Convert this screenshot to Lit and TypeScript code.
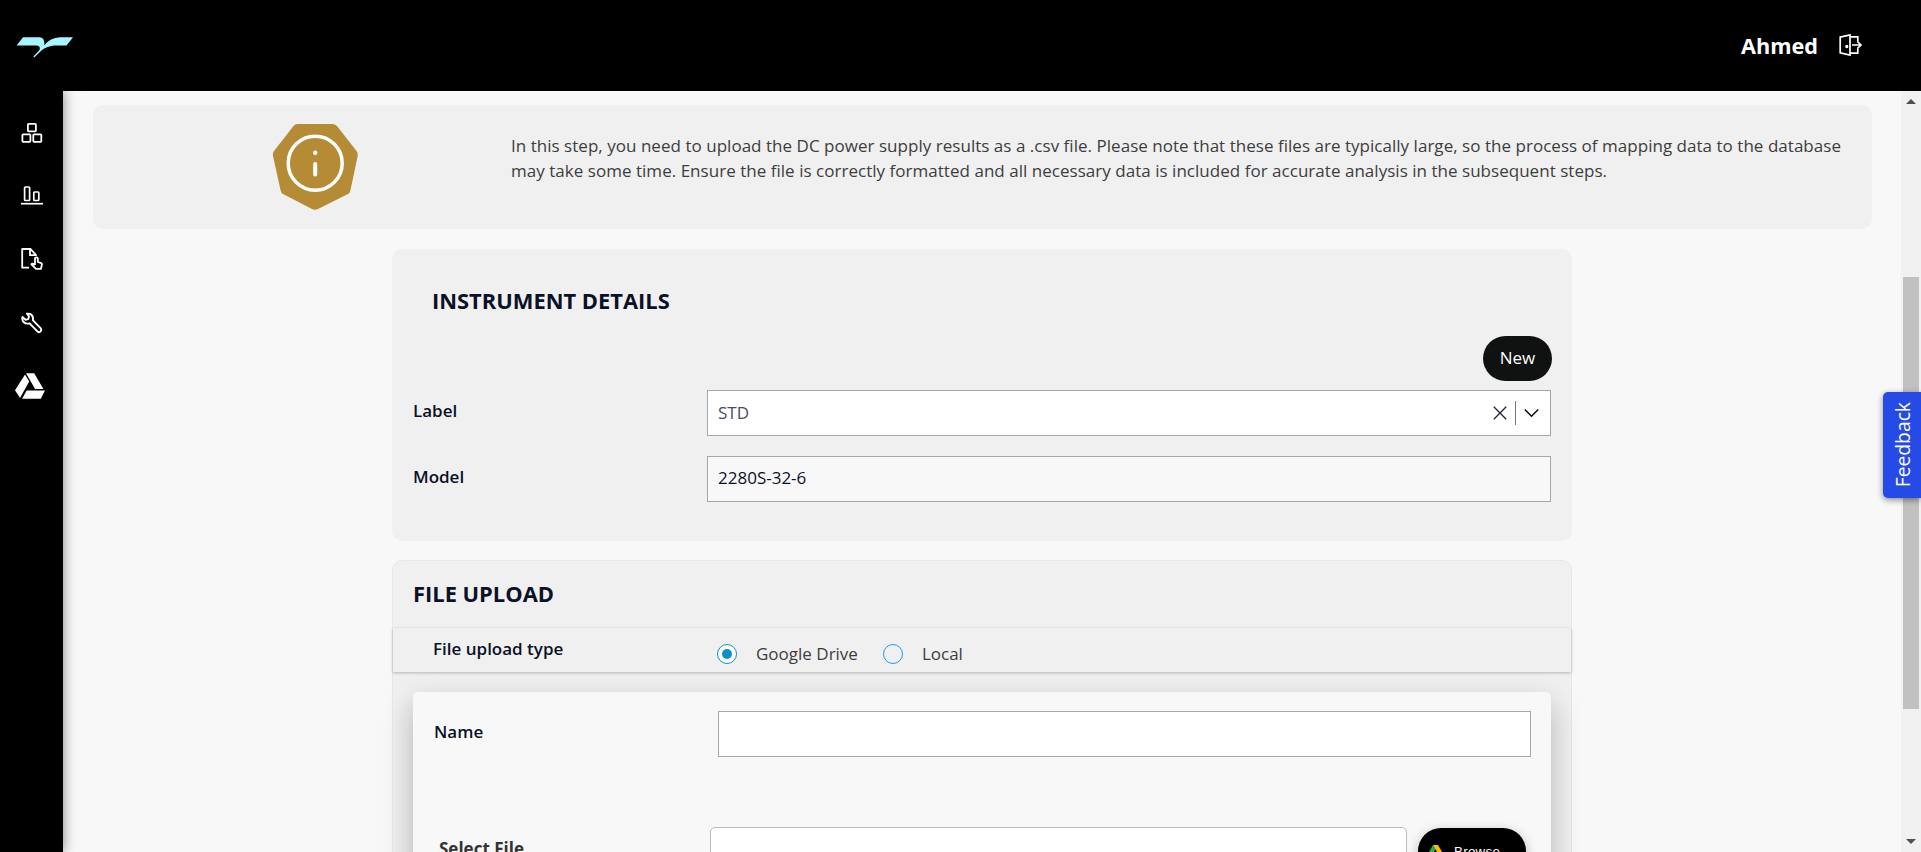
import { LitElement, html, css } from "lit";
import { customElement, state } from "lit/decorators.js";

const navIcons = [
  html`<svg width="22" height="22" viewBox="0 0 22 22" fill="none" stroke="#fff" stroke-width="1.8">
    <rect x="6.900" y="1.800" width="8" height="7.600" rx=".8"/><rect x="1.400" y="12.300" width="8" height="7.600" rx=".8"/><rect x="12.300" y="12.300" width="8" height="7.600" rx=".8"/></svg>`,
  html`<svg width="22" height="22" viewBox="0 0 22 22" fill="none" stroke="#fff" stroke-width="1.7">
    <rect x="3.600" y="2" width="5" height="13.500" rx=".8"/><rect x="12.800" y="7" width="5" height="8.500" rx=".8"/><path d="M0 18.700h22"/></svg>`,
  html`<svg width="22" height="22" viewBox="0 0 22 22" fill="none" stroke="#fff" stroke-width="1.8" stroke-linejoin="round">
    <path d="M8 19.700H1.200V1h8.400l5.400 6.200H9V1.400"/><path d="M14 17v-6.400q0-1.200 1.400-1.200t1.400 1.200V14l3.500 1.200q.8.400.6 1.200l-.9 4.400h-5l-4.600-4.400q.8-1.800 3.600.6"/></svg>`,
  html`<svg width="22" height="22" viewBox="0 0 22 22" fill="none" stroke="#fff" stroke-width="1.900" stroke-linejoin="round">
    <path d="M6 1.600 9 1.900q3.200 1.600 3 5.200l-.2 1.100 8 8.200q1 1.600-.2 3t-3 .2l-8-8.300q-3.600 1-5.800-1.100T1.500 5l3 2.800 2.800-.7.700-2.600z"/></svg>`,
  html`<svg class="drive" width="30" height="26" viewBox="0 0 30 26" fill="#fff">
    <path d="M10 1.500 14.200 8.400 5 25 0 17.200zM11 .3h8.200l9.200 15.700H20.100zM11.700 17.500H30L25.800 25.700H7.100z"/></svg>`,
];

@customElement("app-root")
export class AppRoot extends LitElement {
  @state() private source = "Google Drive";

  static styles = css`
    :host { display: flex; flex-direction: column; height: 852px; overflow: hidden; position: relative; background: #f8f8f8; font: 17px/25px "Open Sans", sans-serif; color: #3d3d3d; }
    * { box-sizing: border-box; }
    svg { display: block; flex: none; }
    header { height: 91px; flex: none; background: #000; display: flex; align-items: center; padding: 0 59px 1px 16px; color: #fff; }
    .logo { margin-top: 4px; }
    .user { margin-left: auto; margin-right: 21px; font-size: 21.700px; font-weight: 700; }
    .body { display: flex; flex: 1; min-height: 0; }
    nav { width: 63px; flex: none; background: #000; box-shadow: 0 0 12px rgba(0,0,0,.5); display: flex; flex-direction: column; align-items: center; padding-top: 10px; }
    .item { height: 63.300px; display: flex; align-items: center; }
    .drive { margin-right: 3px; }
    main { flex: 1; min-width: 0; padding: 14px 29px 0 30px; overflow: hidden; }
    .banner { height: 124px; border-radius: 10px; background: #f0f0f0; display: flex; padding: 19px 20px 0 179px; }
    .banner p { margin: 9px 0 0 152px; white-space: nowrap; letter-spacing: .029px; }
    .card { width: 1180px; margin: 20px 0 0 299px; background: #f0f0f0; border-radius: 10px; color: #0b1126; }
    .details { height: 292px; padding: 38px 21px 0; }
    h2 { margin: 0; font-size: 21.900px; line-height: 28px; font-weight: 700; }
    .details h2 { margin-left: 19px; }
    .actions { display: flex; justify-content: flex-end; margin: 21px -1px 9px 0; }
    .new { width: 69px; height: 45px; border: 0; border-radius: 22.500px; background: #101211; color: #fff; font: 500 17px "Open Sans"; padding: 0 0 2px; }
    .field { display: flex; height: 46px; margin-bottom: 20px; }
    .label { font-weight: 600; font-size: 17px; }
    .field .label { width: 294px; padding-top: 8px; }
    .box { flex: 1; border: 1px solid #a6a8a8; background: #fff; display: flex; align-items: center; padding: 0 11px 1px 10px; font-weight: 400; }
    .std { color: #4a4d5c; margin-right: auto; }
    .readonly { background: #f8f8f8; padding-bottom: 3px; }
    .divider { width: 1px; height: 24px; background: #777; margin: 0 8px; }
    .upload { height: 400px; border: 1px solid #e7e7e7; margin-top: 19px; }
    .upload h2 { padding: 19px 20px 0; height: 67px; }
    .type { height: 44px; background: #f0f0f0; box-shadow: 0 1px 3px rgba(0,0,0,.25); display: flex; padding-left: 40px; }
    .type .label { width: 284px; padding-top: 8px; }
    .option { display: flex; align-items: center; padding-top: 8px; color: #3d3d3d; margin-right: 25px; height: 43px; }
    .radio { width: 20px; height: 20px; border: 1px solid #1a9fe8; border-radius: 50%; margin-right: 19px; display: grid; place-items: center; }
    .radio.on { background: #fff; border-color: #0b91c9; }
    .radio.on::after { content: ""; width: 10px; height: 10px; border-radius: 50%; background: #0b91c9; }
    .form { margin: 20px 20px 0; height: 300px; border-radius: 5px; background: #f8f8f8; box-shadow: 0 12px 30px rgba(0,0,0,.25); padding: 19px 20px 0 21px; }
    .form .field { margin-bottom: 70px; }
    .form .field .label { width: 284px; }
    .form .pick { margin-left: 5px; margin-right: 5px; gap: 11px; }
    .form .pick .label { width: 260px; padding-top: 9px; color: #333; font-weight: 700; }
    .pick .box { border-radius: 5px; border-color: #bbb; }
    .browse { width: 108px; height: 46px; margin-top: 1px; border: 0; border-radius: 23px; background: #000; color: #fff; display: flex; align-items: center; gap: 11px; padding: 0 0 0 10px; font: 13.300px "Liberation Sans"; letter-spacing: .3px; box-shadow: 0 3px 12px rgba(0,0,0,.25); }
    .scroll { width: 20px; flex: none; background: #f1f1f1; display: flex; flex-direction: column; align-items: center; padding: 8px 2px; }
    .thumb { width: 16px; height: 432px; margin-top: 173px; background: #c1c1c1; }
    .down { margin-top: auto; }
    .feedback { position: absolute; right: 0; top: 391.500px; width: 38px; height: 106px; border-radius: 5px 0 0 5px; background: #254ae5; color: #fff; writing-mode: vertical-rl; box-shadow: 0 2px 6px rgba(0,0,0,.45); display: flex; align-items: center; justify-content: center; font: 500 19.300px "Open Sans"; }
    .feedback span { transform: rotate(180deg); }
  `;

  private option(name: string) {
    return html`<div class="option" @click=${() => (this.source = name)}>
      <span class="radio ${this.source === name ? "on" : ""}"></span>${name}</div>`;
  }

  render() {
    return html`
      <header>
        <svg class="logo" width="58" height="22" viewBox="0 0 58 22" fill="#a6f6ff"><path d="M7 1.300H24Q29 2 28.300 9.300 34 2 44 1.300H57L50.500 9.500H38Q30 10.500 26 14L18.500 21.200 17.300 20.700 23.500 14Q24.800 10 21 9.500H.6z"/></svg>
        <span class="user">Ahmed</span>
        <svg width="23" height="22" viewBox="0 0 23 22" fill="none" stroke="#fff" stroke-width="1.700"><path d="M1.200 3.200 11 .9v20.200L1.200 18.800zM11 2.800h7.800v4.500M11 19.200h7.800v-4.500M13 11h8.500M18.300 7.500 22 11l-3.700 3.500"/><circle cx="7.800" cy="12.500" r=".8" fill="#fff"/></svg>
      </header>
      <div class="body">
        <nav>${navIcons.map((i) => html`<div class="item">${i}</div>`)}</nav>
        <main>
          <section class="banner">
            <svg width="87" height="86" viewBox="0 0 87 86"><path d="M26 0H60Q63 0 65 2L84.500 27Q86 29 85.700 32L78.500 66Q78 69 76 70L46 85Q43 86.500 40 85L11 70Q9 69 8.500 66L1 32Q.5 29 2 27L21.500 2Q23 0 26 0z" fill="#b68b35"/><circle cx="43.200" cy="39.200" r="27" fill="none" stroke="#fff" stroke-width="3.500"/><circle cx="43.200" cy="28.700" r="2.200" fill="#fff"/><path d="M43.200 40v10.500" stroke="#fff" stroke-width="4" stroke-linecap="round"/></svg>
            <p>In this step, you need to upload the DC power supply results as a .csv file. Please note that these files are typically large, so the process of mapping data to the database<br>may take some time. Ensure the file is correctly formatted and all necessary data is included for accurate analysis in the subsequent steps.</p>
          </section>
          <section class="card details">
            <h2>INSTRUMENT DETAILS</h2>
            <div class="actions"><button class="new">New</button></div>
            <div class="field"><span class="label">Label</span><div class="box"><span class="std">STD</span>
              <svg width="14" height="14" viewBox="0 0 14 14" stroke="#1d2333" stroke-width="1.300"><path d="M.8.8l12.400 12.400M13.200.8.800 13.200"/></svg>
              <span class="divider"></span>
              <svg width="15" height="10" viewBox="0 0 15 10" fill="none" stroke="#111" stroke-width="1.600"><path d="M.8 1.500 7.500 8.200 14.200 1.500"/></svg></div></div>
            <div class="field"><span class="label">Model</span><div class="box readonly">2280S-32-6</div></div>
          </section>
          <section class="card upload">
            <h2>FILE UPLOAD</h2>
            <div class="type"><span class="label">File upload type</span>${this.option("Google Drive")}${this.option("Local")}</div>
            <div class="form">
              <div class="field"><span class="label">Name</span><div class="box"></div></div>
              <div class="field pick"><span class="label">Select File</span><div class="box"></div>
                <button class="browse"><svg width="15" height="13" viewBox="0 0 30 26"><path d="M10 0 15 8.600 5 26 0 17.400z" fill="#34a853"/><path d="M10 0h10l10 17.400H20z" fill="#fbbc04"/><path d="M10 17.400h20L25 26H5z" fill="#4285f4"/></svg>Browse...</button></div>
            </div>
          </section>
        </main>
        <div class="scroll">
          <svg width="10" height="5" viewBox="0 0 10 5"><path d="M0 5 5 0l5 5z" fill="#505050"/></svg>
          <div class="thumb"></div>
          <svg class="down" width="10" height="5" viewBox="0 0 10 5"><path d="M0 0h10L5 5z" fill="#505050"/></svg>
        </div>
      </div>
      <div class="feedback"><span>Feedback</span></div>
    `;
  }
}
